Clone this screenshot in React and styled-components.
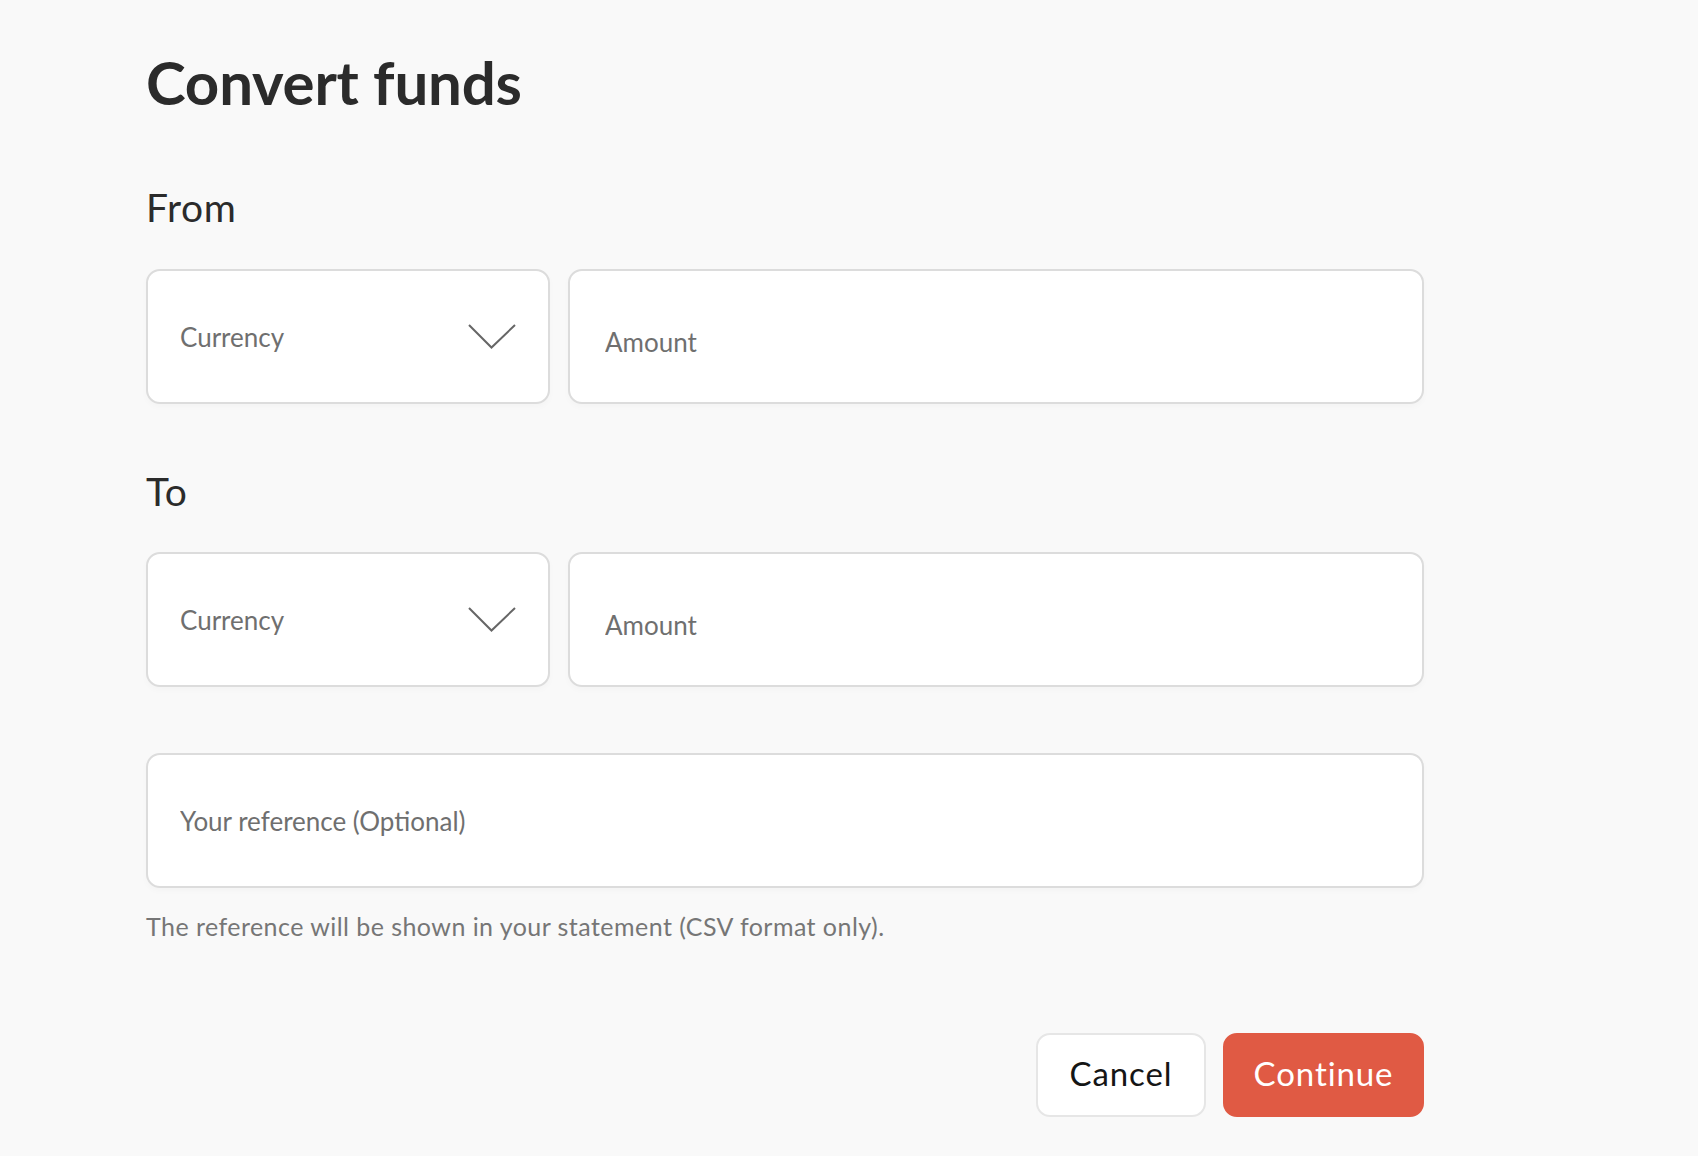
import React from "react";
import styled, { createGlobalStyle } from "styled-components";

const Global = createGlobalStyle`
  html, body {
    margin: 0;
    padding: 0;
    background: #f9f9f9;
  }
  body {
    font-family: Lato, "Noto Sans", sans-serif;
    color: #2a2a2a;
  }
  * { box-sizing: border-box; }
`;

const Page = styled.main`
  width: 1278px;
  margin-left: 146px;
  padding-top: 46px;
  padding-bottom: 40px;
  display: flex;
  flex-direction: column;
`;

const Title = styled.h1`
  margin: 0;
  font-size: 60px;
  line-height: 72px;
  font-weight: 700;
  color: #2b2b2b;
  letter-spacing: -0.2px;
`;

const SectionLabel = styled.h2`
  margin: ${(p) => p.$top}px 0 0;
  font-size: 39px;
  line-height: 47px;
  font-weight: 400;
  letter-spacing: 0.6px;
  color: #2b2b2b;
`;

const Row = styled.div`
  margin-top: ${(p) => p.$top}px;
  display: grid;
  grid-template-columns: 404px 1fr;
  gap: 18px;
`;

const Box = styled.div`
  height: 135px;
  background: #ffffff;
  border: 2px solid #dcdcdc;
  border-radius: 14px;
  box-shadow: 0 3px 6px rgba(0, 0, 0, 0.025);
  display: flex;
  align-items: center;
`;

const Select = styled(Box)`
  padding: 0 32px 0 32px;
  justify-content: space-between;
  cursor: pointer;
`;

const FieldText = styled.span`
  font-size: 26px;
  color: #6f6f6f;
`;

const InputBox = styled(Box)`
  padding: ${(p) => p.$shift || 0}px 32px 0 ${(p) => p.$left || 32}px;
  margin-top: ${(p) => p.$top || 0}px;
`;

const Input = styled.input`
  width: 100%;
  border: none;
  outline: none;
  background: transparent;
  font-family: Lato, "Noto Sans", sans-serif;
  font-size: 26px;
  color: #2b2b2b;
  padding: 0;
  &::placeholder {
    color: #6f6f6f;
    opacity: 1;
  }
`;

const Helper = styled.p`
  margin: 23px 0 0;
  font-size: 25px;
  line-height: 30px;
  letter-spacing: 0.45px;
  color: #767676;
`;

const Actions = styled.div`
  margin-top: 92px;
  display: flex;
  justify-content: flex-end;
  gap: 17px;
`;

const Button = styled.button`
  height: 84px;
  width: ${(p) => p.$w}px;
  padding: 0 0 5px;
  border-radius: 14px;
  font-family: Lato, "Noto Sans", sans-serif;
  font-size: 33px;
  letter-spacing: 0.9px;
  cursor: pointer;
  border: 2px solid ${(p) => (p.$primary ? "#e05a44" : "#e6e6e6")};
  background: ${(p) => (p.$primary ? "#e05a44" : "#ffffff")};
  color: ${(p) => (p.$primary ? "#ffffff" : "#151515")};
`;

const Chevron = () => (
  <svg width="48" height="26" viewBox="0 0 48 26" fill="none">
    <path d="M1 1 L23.5 23.5 L47 1" stroke="#666" strokeWidth="2" />
  </svg>
);

const CurrencySelect = () => (
  <Select role="button">
    <FieldText>Currency</FieldText>
    <Chevron />
  </Select>
);

export default function App() {
  return (
    <>
      <Global />
      <Page>
        <Title>Convert funds</Title>
        <SectionLabel $top={66}>From</SectionLabel>
        <Row $top={38}>
          <CurrencySelect />
          <InputBox $shift={10} $left={35}>
            <Input placeholder="Amount" />
          </InputBox>
        </Row>
        <SectionLabel $top={64}>To</SectionLabel>
        <Row $top={37}>
          <CurrencySelect />
          <InputBox $shift={10} $left={35}>
            <Input placeholder="Amount" />
          </InputBox>
        </Row>
        <InputBox $top={66}>
          <Input placeholder="Your reference (Optional)" />
        </InputBox>
        <Helper>The reference will be shown in your statement (CSV format only).</Helper>
        <Actions>
          <Button $w={170}>Cancel</Button>
          <Button $w={201} $primary>Continue</Button>
        </Actions>
      </Page>
    </>
  );
}
